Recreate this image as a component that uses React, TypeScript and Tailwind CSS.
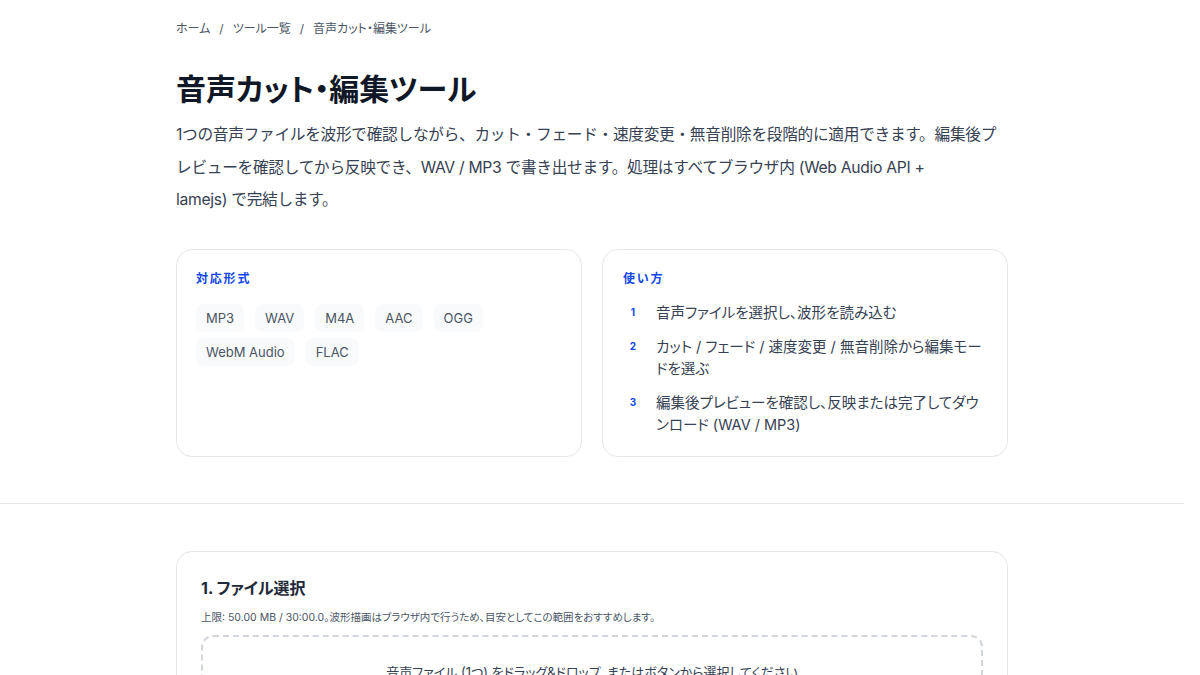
const FONT = { fontFamily: 'Inter, "Noto Sans CJK JP", sans-serif' };
const PALT = { fontFeatureSettings: '"palt"' };

const formats = ['MP3', 'WAV', 'M4A', 'AAC', 'OGG', 'WebM Audio', 'FLAC'];

const steps = [
  '音声ファイルを選択し、波形を読み込む',
  'カット / フェード / 速度変更 / 無音削除から編集モードを選ぶ',
  '編集後プレビューを確認し、反映または完了してダウンロード (WAV / MP3)',
];

export default function App() {
  return (
    <div className="min-h-screen w-[1184px] bg-white text-gray-900" style={FONT}>
      <section className="border-b border-gray-200">
        <div className="mx-auto w-[832px] pt-[20px] pb-[46px]">
          <nav className="flex items-center gap-[9px] text-[12px] text-gray-600" style={PALT}>
            <span>ホーム</span>
            <span>/</span>
            <span>ツール一覧</span>
            <span>/</span>
            <span>音声カット・編集ツール</span>
          </nav>

          <h1 className="mt-[33px] text-[30px] font-bold leading-9 text-gray-900" style={PALT}>
            音声カット・編集ツール
          </h1>

          <p className="mt-[12px] text-[15.7px] leading-[32.5px] tracking-[-0.3px] text-gray-700">
            1つの音声ファイルを波形で確認しながら、カット・フェード・速度変更・無音削除を段階的に適用できます。編集後プレビューを確認してから反映でき、WAV / MP3 で書き出せます。処理はすべてブラウザ内 (Web Audio API +
            <br />
            lamejs) で完結します。
          </p>

          <div className="mt-[32px] grid grid-cols-2 gap-5">
            <div className="h-[208px] rounded-2xl border border-gray-200 px-[19px] pt-5">
              <h2 className="text-[12px] font-bold tracking-[0.15em] text-blue-700">対応形式</h2>
              <div className="mt-[16px] flex flex-wrap gap-x-[11px] gap-y-[6px]">
                {formats.map(f => (
                  <span
                    key={f}
                    className="rounded-lg bg-gray-50 px-[10px] py-[4px] text-[13px] leading-5 text-gray-600"
                  >
                    {f}
                  </span>
                ))}
              </div>
            </div>

            <div className="h-[208px] rounded-2xl border border-gray-200 px-5 pt-5">
              <h2 className="text-[12px] font-bold tracking-[0.15em] text-blue-700">使い方</h2>
              <ol className="mt-[14px] flex flex-col gap-[12px]">
                {steps.map((s, i) => (
                  <li key={s} className="flex gap-[13px]">
                    <span className="mt-[1px] flex h-5 w-5 shrink-0 items-center justify-center rounded-full text-[10px] font-bold text-blue-700">
                      {i + 1}
                    </span>
                    <span className="text-[14.5px] leading-[22px] text-gray-700" style={PALT}>
                      {s}
                    </span>
                  </li>
                ))}
              </ol>
            </div>
          </div>
        </div>
      </section>

      <section className="pt-[47px]">
        <div className="mx-auto w-[832px] rounded-2xl border border-gray-200 px-6 pt-[24px] pb-6">
          <h2 className="text-[16px] font-bold text-gray-800" style={PALT}>1. ファイル選択</h2>
          <p className="mt-[10px] text-[10.5px] text-gray-600" style={PALT}>
            上限: 50.00 MB / 30:00.0。波形描画はブラウザ内で行うため、目安としてこの範囲をおすすめします。
          </p>
          <div className="mt-[10px] rounded-xl border-2 border-dashed border-gray-300 px-6 pt-[26px] pb-10 text-center">
            <p className="text-[13px] text-gray-700" style={PALT}>
              音声ファイル (1つ) をドラッグ&ドロップ、またはボタンから選択してください
            </p>
          </div>
        </div>
      </section>
    </div>
  );
}
